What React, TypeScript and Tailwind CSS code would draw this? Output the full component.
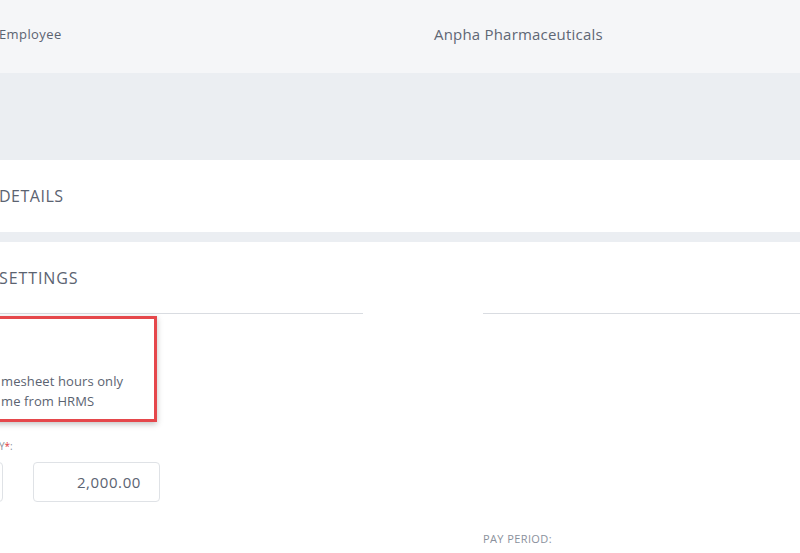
const font = { fontFamily: '"Open Sans", "Liberation Sans", sans-serif' };

export default function App() {
  return (
    <div className="h-[553px] w-[800px] overflow-hidden bg-[#ebeef2] text-[#5b6371]" style={font}>
      <div className="flex h-[73px] items-center bg-[#f5f6f8] pb-[4px]">
        <div className="-ml-[1px] w-[435px] text-[13px] tracking-[0.4px]">Employee</div>
        <div className="text-[15px] tracking-[0.2px] text-[#5f6775]">Anpha Pharmaceuticals</div>
      </div>

      <div className="h-[87px]" />

      <div className="flex h-[72px] items-center bg-white">
        <h2 className="-ml-[1px] text-[16px] tracking-[0.5px]">DETAILS</h2>
      </div>

      <div className="h-[10px]" />

      <div className="h-[320px] bg-white">
        <div className="flex h-[71px] items-center">
          <h2 className="-ml-[1px] text-[16px] tracking-[0.9px]">SETTINGS</h2>
        </div>

        <div className="flex">
          <div className="w-[363px] border-t border-[#d9dce1]">
            <div className="-ml-[6px] mt-[2px] w-[163px] border-[3px] border-[#e5474b] pb-[8px] pt-[52px] pl-[6px] text-[13px] leading-[20px] tracking-[0.1px] shadow-[0_2px_6px_rgba(0,0,0,0.25)]">
              <p className="-ml-[2px]">mesheet hours only</p>
              <p className="-ml-[2px]">me from HRMS</p>
            </div>

            <div className="mt-[17px] text-[10px] leading-[14px] text-[#8a919c]">
              <span className="-ml-[1px]">Y</span>
              <span className="text-[#e03b3b]">*</span>:
            </div>

            <div className="mt-[9px] flex gap-[30px]">
              <div className="-ml-[97px] h-[40px] w-[100px] rounded-[4px] border border-[#dfe2e6]" />
              <div className="flex h-[40px] w-[127px] items-center justify-end rounded-[4px] border border-[#dfe2e6] pr-[18px] text-[15px] tracking-[0.6px] text-[#5b6371]">
                2,000.00
              </div>
            </div>
          </div>

          <div className="w-[120px]" />

          <div className="flex-1 border-t border-[#d9dce1]">
            <div className="pt-[217px] text-[11px] tracking-[0.4px] text-[#8a919c]">PAY PERIOD:</div>
          </div>
        </div>
      </div>
    </div>
  );
}
